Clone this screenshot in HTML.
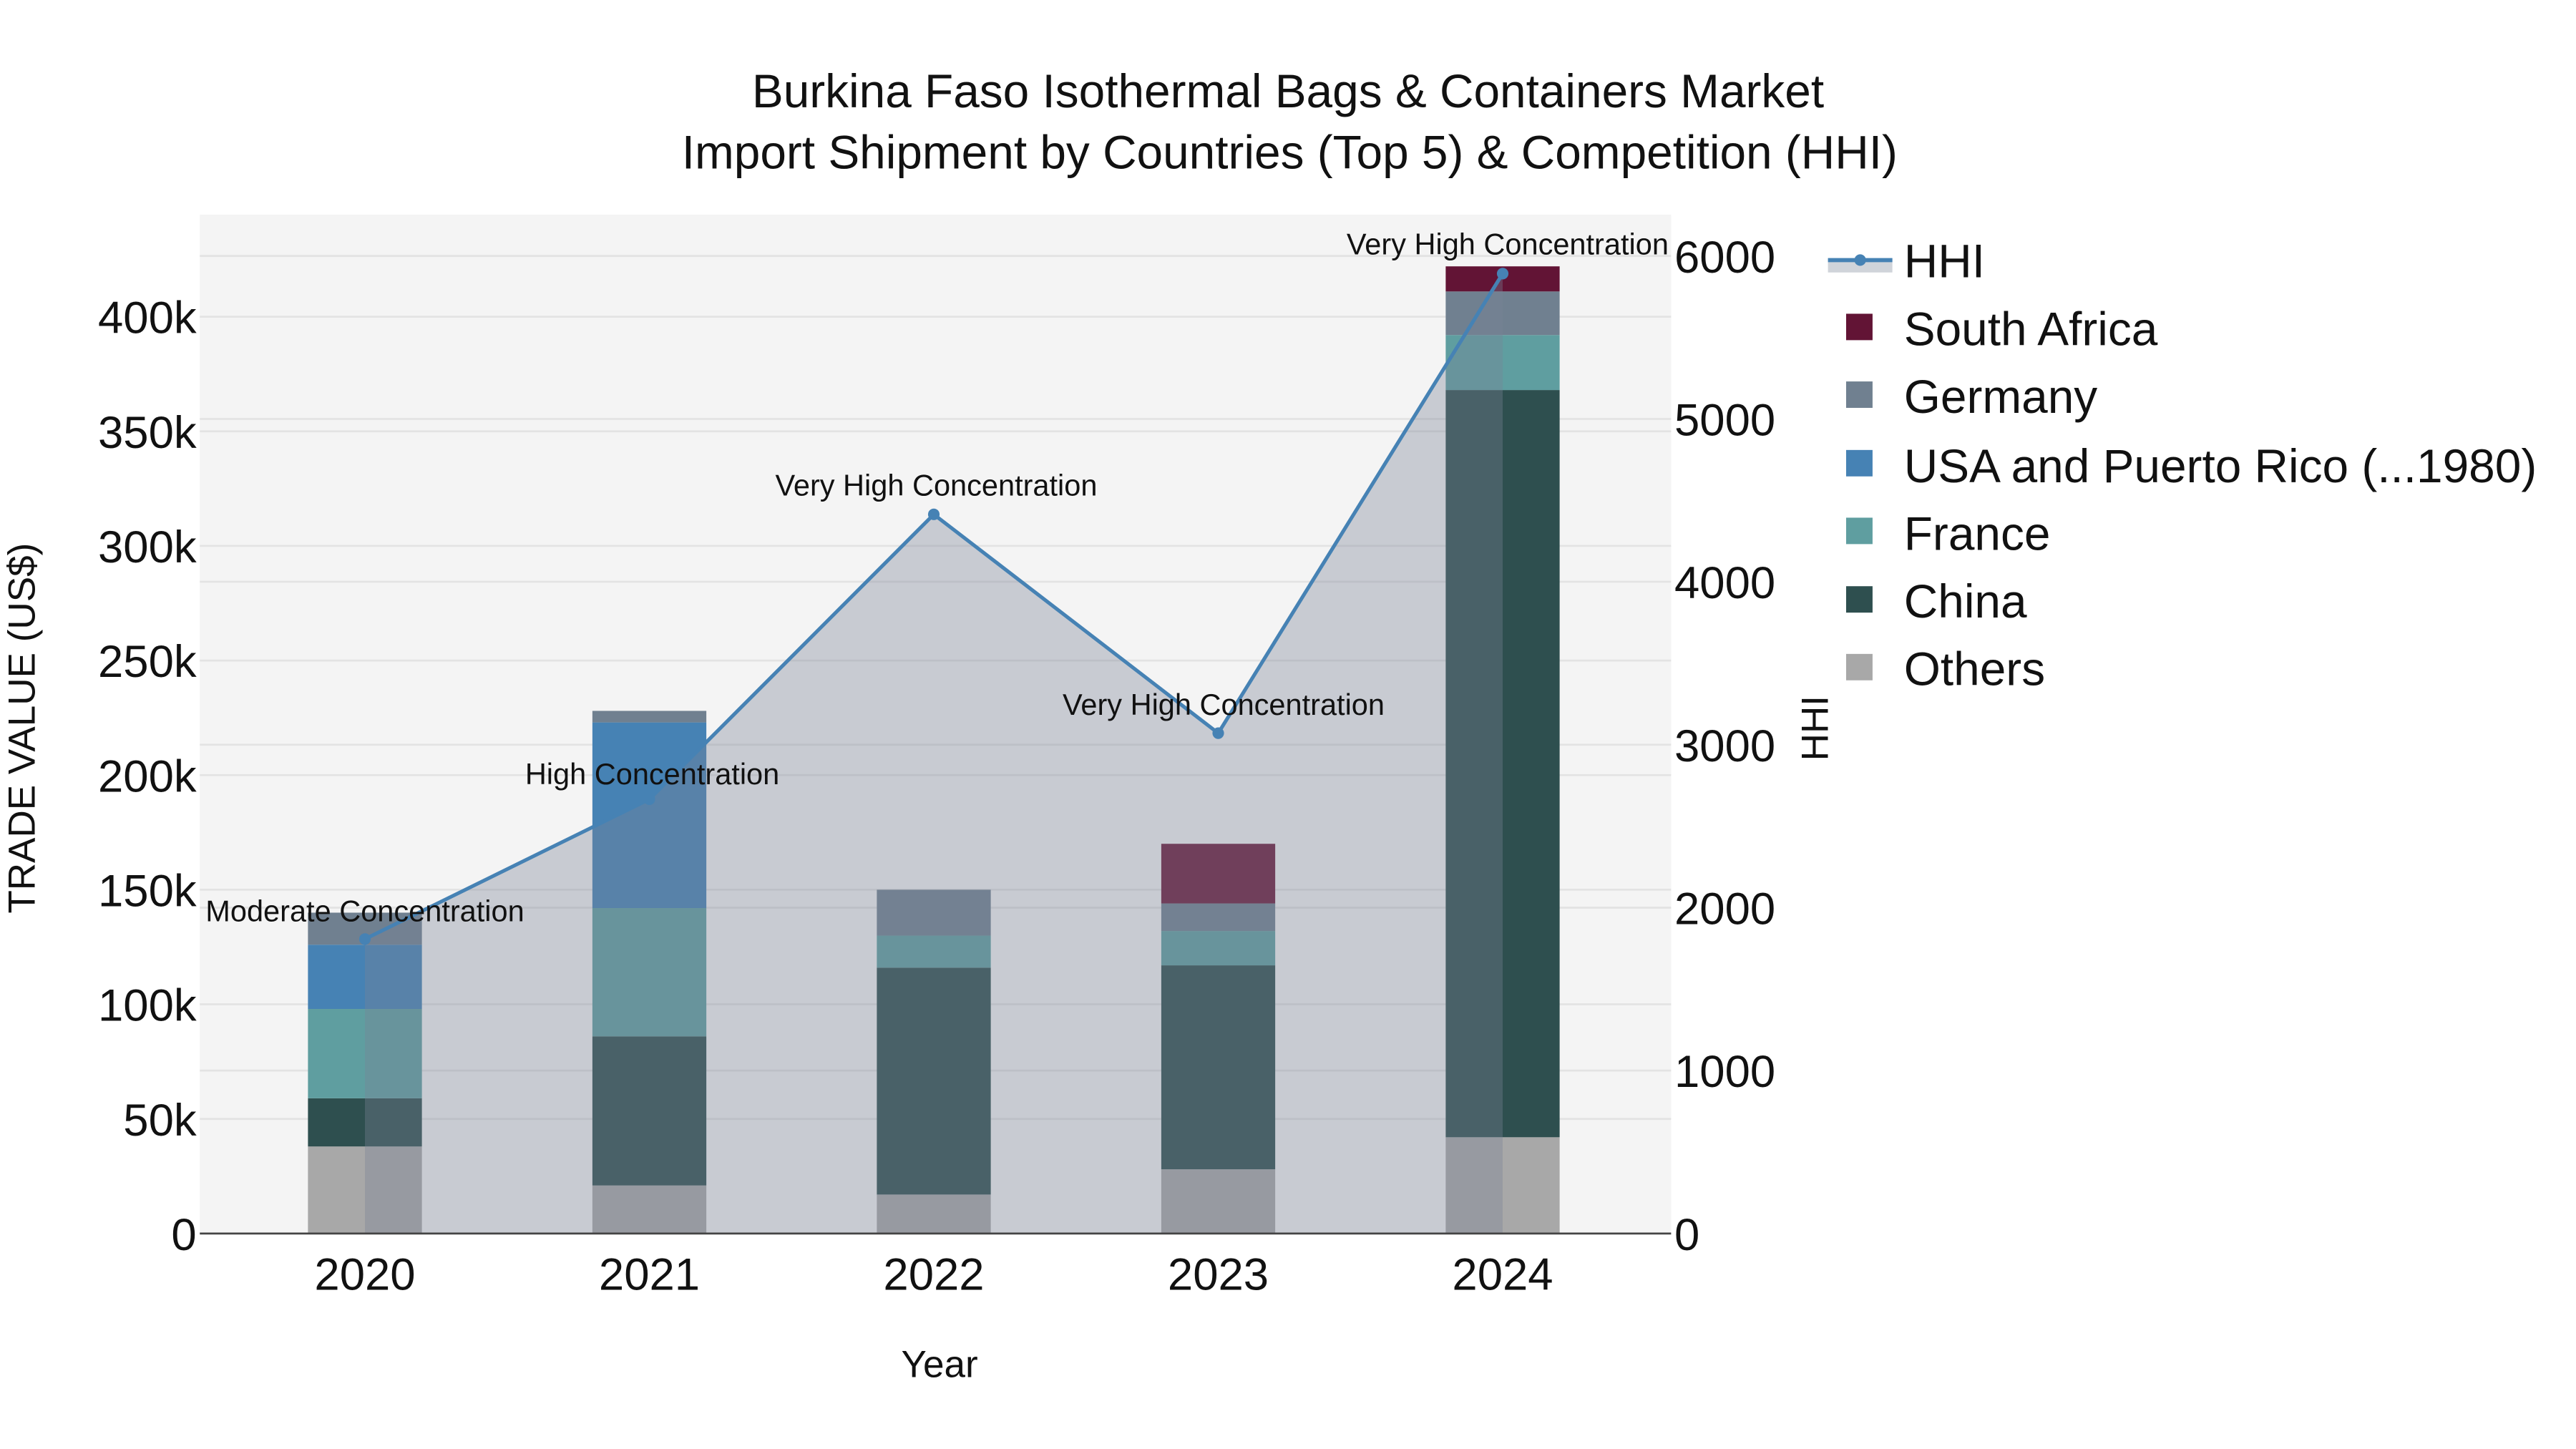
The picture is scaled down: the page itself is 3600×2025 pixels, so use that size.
<!DOCTYPE html>
<html><head><meta charset="utf-8"><style>
html,body{margin:0;padding:0;background:#fff;}
svg{display:block;}
text{font-family:"Liberation Sans",sans-serif;fill:#111;}
</style></head><body>
<svg width="3600" height="2025" viewBox="0 0 1560 877.5" xmlns="http://www.w3.org/2000/svg">
<rect x="0" y="0" width="1560" height="877.5" fill="#fff"/>
<text x="780" y="65" font-size="28.5" text-anchor="middle">Burkina Faso Isothermal Bags &amp; Containers Market</text>
<text x="781" y="102" font-size="28.5" text-anchor="middle">Import Shipment by Countries (Top 5) &amp; Competition (HHI)</text>
<rect x="121" y="130" width="891" height="617" fill="#f4f4f4"/>
<g stroke="#e3e3e3" stroke-width="1.2">
<line x1="121" x2="1012" y1="677.6" y2="677.6"/><line x1="121" x2="1012" y1="608.2" y2="608.2"/>
<line x1="121" x2="1012" y1="538.8" y2="538.8"/><line x1="121" x2="1012" y1="469.4" y2="469.4"/>
<line x1="121" x2="1012" y1="400" y2="400"/><line x1="121" x2="1012" y1="330.6" y2="330.6"/>
<line x1="121" x2="1012" y1="261.2" y2="261.2"/><line x1="121" x2="1012" y1="191.8" y2="191.8"/>
<line x1="121" x2="1012" y1="155" y2="155"/><line x1="121" x2="1012" y1="253.7" y2="253.7"/><line x1="121" x2="1012" y1="352.3" y2="352.3"/><line x1="121" x2="1012" y1="451" y2="451"/><line x1="121" x2="1012" y1="549.7" y2="549.7"/><line x1="121" x2="1012" y1="648.3" y2="648.3"/>
</g>
<g>
<rect x="186.5" y="694.3" width="69" height="52.7" fill="#a8a8a8"/>
<rect x="186.5" y="665.1" width="69" height="29.2" fill="#2e4f4f"/>
<rect x="186.5" y="611" width="69" height="54.1" fill="#5f9ea0"/>
<rect x="186.5" y="572.1" width="69" height="38.9" fill="#4682b4"/>
<rect x="186.5" y="552.7" width="69" height="19.4" fill="#708090"/>

<rect x="358.75" y="717.9" width="69" height="29.1" fill="#a8a8a8"/>
<rect x="358.75" y="627.6" width="69" height="90.3" fill="#2e4f4f"/>
<rect x="358.75" y="549.9" width="69" height="77.7" fill="#5f9ea0"/>
<rect x="358.75" y="437.5" width="69" height="112.4" fill="#4682b4"/>
<rect x="358.75" y="430.5" width="69" height="7" fill="#708090"/>

<rect x="531" y="723.4" width="69" height="23.6" fill="#a8a8a8"/>
<rect x="531" y="586" width="69" height="137.4" fill="#2e4f4f"/>
<rect x="531" y="566.6" width="69" height="19.4" fill="#5f9ea0"/>
<rect x="531" y="538.8" width="69" height="27.8" fill="#708090"/>

<rect x="703.25" y="708.1" width="69" height="38.9" fill="#a8a8a8"/>
<rect x="703.25" y="584.6" width="69" height="123.5" fill="#2e4f4f"/>
<rect x="703.25" y="563.8" width="69" height="20.8" fill="#5f9ea0"/>
<rect x="703.25" y="547.1" width="69" height="16.7" fill="#708090"/>
<rect x="703.25" y="511" width="69" height="36.1" fill="#6b1a3a"/>

<rect x="875.5" y="688.7" width="69" height="58.3" fill="#a8a8a8"/>
<rect x="875.5" y="236.2" width="69" height="452.5" fill="#2e4f4f"/>
<rect x="875.5" y="202.9" width="69" height="33.3" fill="#5f9ea0"/>
<rect x="875.5" y="176.5" width="69" height="26.4" fill="#708090"/>
<rect x="875.5" y="161.3" width="69" height="15.2" fill="#621435"/>
</g>
<polygon points="221,747 221,568.7 393.25,484 565.5,311.5 737.75,444 910,165.7 910,747" fill="rgba(123,130,150,0.36)"/>
<polyline points="221,568.7 393.25,484 565.5,311.5 737.75,444 910,165.7" fill="none" stroke="#4682b4" stroke-width="2.2"/>
<g fill="#4682b4"><circle cx="221" cy="568.7" r="3.5"/><circle cx="393.25" cy="484" r="3.5"/><circle cx="565.5" cy="311.5" r="3.5"/><circle cx="737.75" cy="444" r="3.5"/><circle cx="910" cy="165.7" r="3.5"/></g>
<line x1="121" x2="1012" y1="747" y2="747" stroke="#444" stroke-width="1.2"/>
<g font-size="18" text-anchor="middle">
<text x="221" y="558">Moderate Concentration</text>
<text x="395" y="475">High Concentration</text>
<text x="567" y="300">Very High Concentration</text>
<text x="741" y="433">Very High Concentration</text>
<text x="913" y="154">Very High Concentration</text>
</g>
<g font-size="27.5" text-anchor="end">
<text x="119" y="757">0</text><text x="119" y="687.6">50k</text><text x="119" y="618.2">100k</text>
<text x="119" y="548.8">150k</text><text x="119" y="479.4">200k</text><text x="119" y="410">250k</text>
<text x="119" y="340.6">300k</text><text x="119" y="271.2">350k</text><text x="119" y="201.8">400k</text>
</g>
<g font-size="27.5">
<text x="1014" y="757">0</text><text x="1014" y="658.3">1000</text><text x="1014" y="559.7">2000</text>
<text x="1014" y="461">3000</text><text x="1014" y="362.3">4000</text><text x="1014" y="263.7">5000</text><text x="1014" y="165">6000</text>
</g>
<g font-size="27.5" text-anchor="middle">
<text x="221" y="781">2020</text><text x="393.25" y="781">2021</text><text x="565.5" y="781">2022</text><text x="737.75" y="781">2023</text><text x="910" y="781">2024</text>
</g>
<text x="569" y="834" font-size="23" text-anchor="middle">Year</text>
<text transform="translate(21,441) rotate(-90)" font-size="23" text-anchor="middle">TRADE VALUE (US$)</text>
<text transform="translate(1107,441) rotate(-90)" font-size="23" text-anchor="middle">HHI</text>
<rect x="1107" y="156.5" width="39" height="8.5" fill="#d0d4da"/>
<line x1="1107" x2="1146" y1="157.5" y2="157.5" stroke="#4682b4" stroke-width="2.5"/>
<circle cx="1126.5" cy="157.5" r="3.5" fill="#4682b4"/>
<g font-size="28.5">
<text x="1153" y="168">HHI</text>
<text x="1153" y="209">South Africa</text>
<text x="1153" y="250">Germany</text>
<text x="1153" y="292">USA and Puerto Rico (...1980)</text>
<text x="1153" y="333">France</text>
<text x="1153" y="374">China</text>
<text x="1153" y="415">Others</text>
</g>
<rect x="1118" y="190" width="16" height="16" fill="#621435"/>
<rect x="1118" y="231" width="16" height="16" fill="#708090"/>
<rect x="1118" y="272.5" width="16" height="16" fill="#4682b4"/>
<rect x="1118" y="313.5" width="16" height="16" fill="#5f9ea0"/>
<rect x="1118" y="355" width="16" height="16" fill="#2e4f4f"/>
<rect x="1118" y="396" width="16" height="16" fill="#a8a8a8"/>
</svg>
</body></html>
